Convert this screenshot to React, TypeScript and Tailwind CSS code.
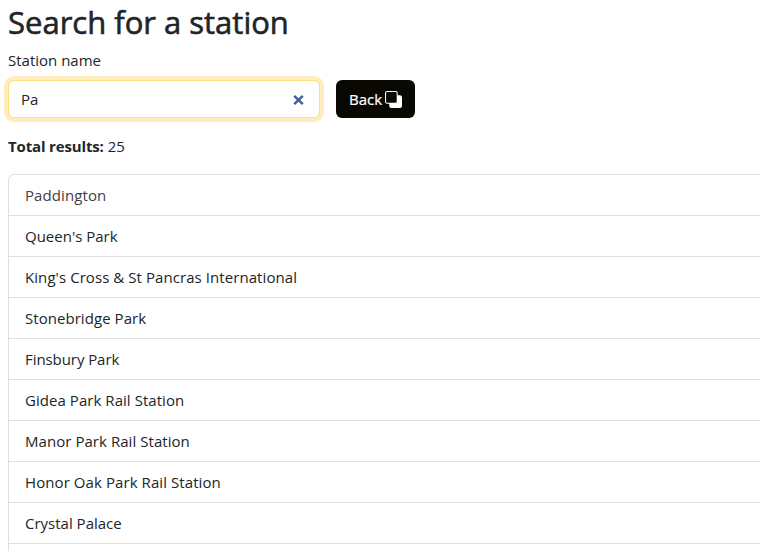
const stations: { name: string; style: string }[] = [
  { name: "Paddington", style: "text-[#3c4046] tracking-[0.1px]" },
  { name: "Queen's Park", style: "" },
  { name: "King's Cross & St Pancras International", style: "tracking-[0.07px]" },
  { name: "Stonebridge Park", style: "tracking-[0.05px]" },
  { name: "Finsbury Park", style: "tracking-[-0.07px]" },
  { name: "Gidea Park Rail Station", style: "tracking-[0.05px]" },
  { name: "Manor Park Rail Station", style: "tracking-[0.05px]" },
  { name: "Honor Oak Park Rail Station", style: "tracking-[0.08px]" },
  { name: "Crystal Palace", style: "" },
];

function BackIcon() {
  return (
    <svg width="17" height="17" viewBox="0 0 16 16" fill="currentColor">
      <path d="M0 2a2 2 0 0 1 2-2h8a2 2 0 0 1 2 2v2h2a2 2 0 0 1 2 2v8a2 2 0 0 1-2 2H6a2 2 0 0 1-2-2v-2H2a2 2 0 0 1-2-2zm2-1a1 1 0 0 0-1 1v8a1 1 0 0 0 1 1h8a1 1 0 0 0 1-1V2a1 1 0 0 0-1-1z" />
    </svg>
  );
}

export default function App() {
  return (
    <div className="h-[551px] w-[760px] overflow-hidden bg-white pl-2 font-['Open_Sans','Noto_Sans',sans-serif] text-[15px] leading-6 text-[#212529]">
      <h1 className="mt-[3px] h-[38px] whitespace-nowrap text-[31px] font-medium leading-[38px] [-webkit-text-stroke:0.6px_#212529]">
        <span>Search for a station</span>
      </h1>
      <div className="mt-[7px] h-6 whitespace-nowrap"><span>Station name</span></div>
      <div className="mt-2 flex gap-4">
        <div className="flex h-[38px] w-[312px] items-center justify-between rounded-md border border-[#fbdf81] bg-white pl-3 pr-[15px] shadow-[0_0_0_4px_#feedbd]">
          <span>Pa</span>
          <svg className="mt-0.5" width="11" height="10" viewBox="0 0 11 10" fill="none" stroke="#3f5f9f" strokeWidth="2.5">
            <path d="M1.2 0.9l8.6 8.2M9.8 0.9l-8.6 8.2" />
          </svg>
        </div>
        <button className="flex h-[38px] w-[79px] items-center gap-[3px] rounded-md bg-[#090803] pl-[13px] text-white [-webkit-text-stroke:0.2px_white]">
          <span>Back</span>
          <BackIcon />
        </button>
      </div>
      <p className="mt-4 h-6 whitespace-nowrap">
        <strong className="font-bold tracking-[-0.15px]">Total results:</strong> <span>25</span>
      </p>
      <ul className="mt-4 rounded-tl-md border-l border-t border-[#dfdfdf]">
        {stations.map((s) => (
          <li key={s.name} className="h-[41px] whitespace-nowrap border-b border-[#dfdfdf] pl-4 leading-10">
            <span className={s.style}>{s.name}</span>
          </li>
        ))}
        <li className="h-[41px]" />
      </ul>
    </div>
  );
}
